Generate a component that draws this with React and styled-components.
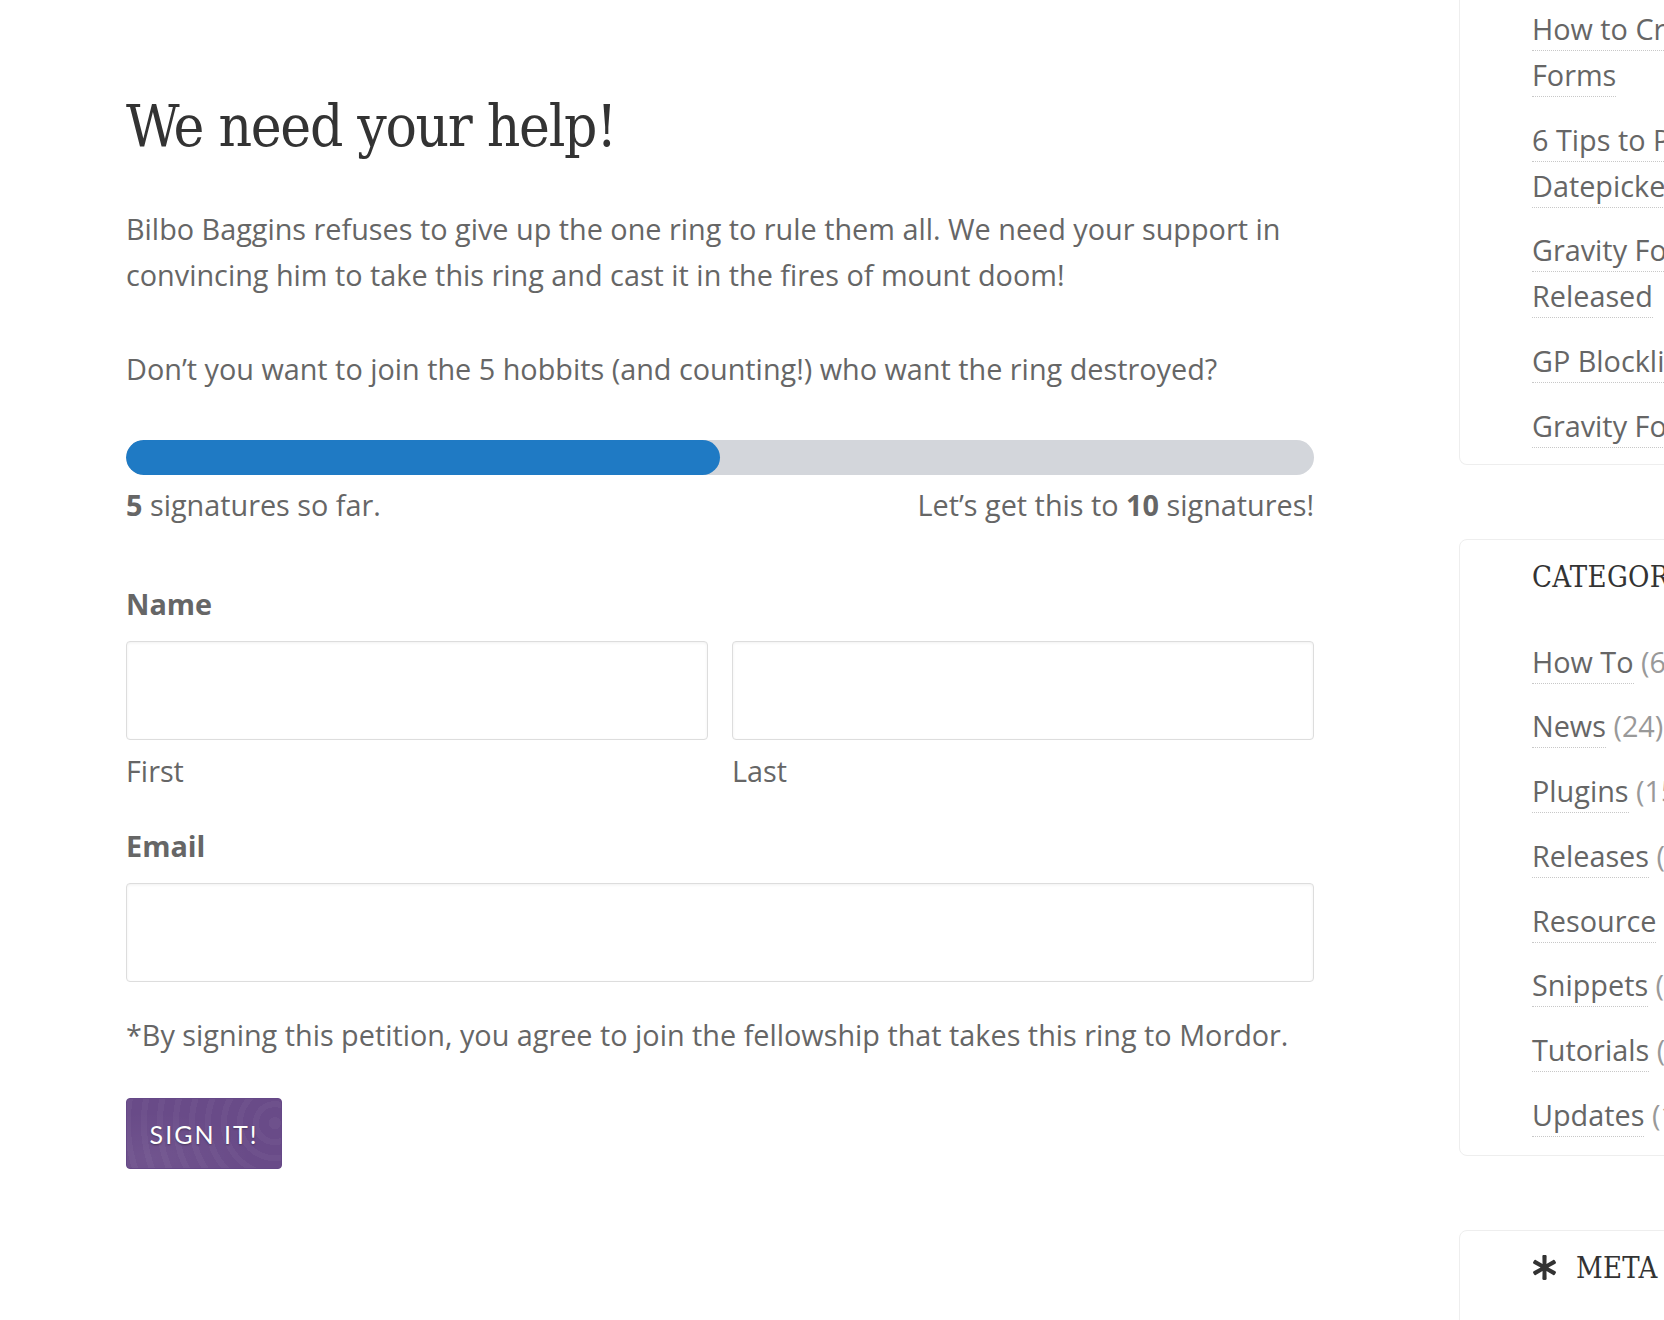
import React from "react";
import styled, { createGlobalStyle } from "styled-components";
import { FaAsterisk } from "react-icons/fa";

const GlobalStyle = createGlobalStyle`
  html, body {
    margin: 0;
    padding: 0;
    background: #fff;
    overflow: hidden;
  }
  body {
    font-family: "Open Sans", "Liberation Sans", sans-serif;
    color: #666;
  }
`;

const recentPosts = [
  "How to Create Beautiful Forms",
  "6 Tips to Perfect Your Datepicker",
  "Gravity Forms 2.5 Is Released",
  "GP Blocklist 1.0",
  "Gravity Forms 2.4.20",
];

const categories = [
  ["How To", 6],
  ["News", 24],
  ["Plugins", 15],
  ["Releases", 12],
  ["Resource", 9],
  ["Snippets", 31],
  ["Tutorials", 18],
  ["Updates", 14],
];

const metaLinks = ["Log in", "Entries feed", "Comments feed", "WordPress.org"];

export default function App() {
  const signatures = 5;
  const goal = 10;

  return (
    <>
      <GlobalStyle />
      <Page>
        <Main>
          <Title>We need your help!</Title>
          <Para>
            Bilbo Baggins refuses to give up the one ring to rule them all. We
            need your support in convincing him to take this ring and cast it in
            the fires of mount doom!
          </Para>
          <Para>
            Don’t you want to join the 5 hobbits (and counting!) who want the
            ring destroyed?
          </Para>

          <Progress>
            <Track>
              <Fill style={{ width: `${(signatures / goal) * 100}%` }} />
            </Track>
            <ProgressMeta>
              <span>
                <b>{signatures}</b> signatures so far.
              </span>
              <span>
                Let’s get this to <b>{goal}</b> signatures!
              </span>
            </ProgressMeta>
          </Progress>

          <Field $gap="53px">
            <Label>Name</Label>
            <NameRow>
              <SubField>
                <Input type="text" />
                <SubLabel>First</SubLabel>
              </SubField>
              <SubField>
                <Input type="text" />
                <SubLabel>Last</SubLabel>
              </SubField>
            </NameRow>
          </Field>

          <Field $gap="29px">
            <Label>Email</Label>
            <Input type="email" />
          </Field>

          <Disclaimer>
            *By signing this petition, you agree to join the fellowship that
            takes this ring to Mordor.
          </Disclaimer>

          <SignButton type="button">Sign it!</SignButton>
        </Main>

        <Sidebar>
          <Widget $first>
            <LinkList>
              {recentPosts.map((p) => (
                <LinkItem key={p}>
                  <SideLink>{p}</SideLink>
                </LinkItem>
              ))}
            </LinkList>
          </Widget>

          <Widget>
            <WidgetTitle>Categories</WidgetTitle>
            <LinkList>
              {categories.map(([name, count]) => (
                <LinkItem key={name}>
                  <SideLink>{name}</SideLink> <Count>({count})</Count>
                </LinkItem>
              ))}
            </LinkList>
          </Widget>

          <Widget>
            <WidgetTitle>
              <FaAsterisk size={25} />
              Meta
            </WidgetTitle>
            <LinkList>
              {metaLinks.map((m) => (
                <LinkItem key={m}>
                  <SideLink>{m}</SideLink>
                </LinkItem>
              ))}
            </LinkList>
          </Widget>
        </Sidebar>
      </Page>
    </>
  );
}

const Page = styled.div`
  display: flex;
  align-items: flex-start;
  padding-left: 126px;
  width: 2000px;
`;

const Main = styled.main`
  width: 1188px;
  flex-shrink: 0;
  padding-top: 91px;
`;

const Title = styled.h1`
  margin: 0 0 45px;
  font-family: "DejaVu Serif", "Liberation Serif", serif;
  font-stretch: condensed;
  font-weight: 400;
  font-size: 58px;
  line-height: 70px;
  color: #333;
  letter-spacing: -1.3px;
`;

const Para = styled.p`
  margin: 0 0 48px;
  font-size: 28.8px;
  line-height: 46px;
  color: #666;
`;

const Progress = styled.div`
  margin-top: 0;
`;

const Track = styled.div`
  height: 35px;
  background: #d3d6db;
  border-radius: 18px;
  overflow: hidden;
`;

const Fill = styled.div`
  height: 100%;
  background: #1f7ac4;
  border-radius: 18px;
`;

const ProgressMeta = styled.div`
  display: flex;
  justify-content: space-between;
  font-size: 28.8px;
  line-height: 46px;
  margin-top: 7px;

  b {
    font-weight: 700;
  }
`;

const Field = styled.div`
  margin-top: ${(p) => p.$gap};
`;

const Label = styled.div`
  font-weight: 700;
  font-size: 28.8px;
  line-height: 46px;
  color: #666;
  margin-bottom: 14px;
`;

const NameRow = styled.div`
  display: grid;
  grid-template-columns: 1fr 1fr;
  column-gap: 24px;
`;

const SubField = styled.div`
  display: flex;
  flex-direction: column;
`;

const Input = styled.input`
  display: block;
  box-sizing: border-box;
  width: 100%;
  height: 99px;
  border: 1px solid #ddd;
  border-radius: 4px;
  background: #fff;
  box-shadow: inset 0 1px 3px rgba(0, 0, 0, 0.06);
  font: inherit;
  outline: none;
`;

const SubLabel = styled.span`
  font-size: 28.8px;
  line-height: 46px;
  margin-top: 8px;
`;

const Disclaimer = styled.p`
  margin: 30px 0 0;
  font-size: 28.8px;
  line-height: 46px;
`;

const SignButton = styled.button`
  display: block;
  margin-top: 40px;
  width: 156px;
  height: 71px;
  border: 1px solid #654887;
  border-radius: 4px;
  background-color: #694b88;
  background-image:
    repeating-radial-gradient(
      circle at 96% 35%,
      rgba(255, 255, 255, 0.035) 0 6px,
      rgba(255, 255, 255, 0) 6px 16px
    ),
    radial-gradient(ellipse at 15% 85%, rgba(255, 255, 255, 0.05), transparent 55%);
  color: #fff;
  font-family: Lato, "Open Sans", sans-serif;
  font-size: 25px;
  letter-spacing: 2px;
  text-transform: uppercase;
  text-shadow: 0 1px 2px rgba(0, 0, 0, 0.35);
  cursor: pointer;
`;

const Sidebar = styled.aside`
  margin-left: 145px;
  width: 460px;
  flex-shrink: 0;
  display: flex;
  flex-direction: column;
  gap: 74px;
`;

const Widget = styled.section`
  border: 1px solid #eee;
  border-radius: ${(p) => (p.$first ? "0 0 0 8px" : "8px")};
  border-top-width: ${(p) => (p.$first ? "0" : "1px")};
  padding: ${(p) => (p.$first ? "6px 0 15px 72px" : "15px 0 17px 72px")};
`;

const WidgetTitle = styled.h3`
  display: flex;
  align-items: center;
  gap: 19px;
  margin: 0 0 40px;
  font-family: "DejaVu Serif", "Liberation Serif", serif;
  font-stretch: condensed;
  font-weight: 400;
  font-size: 29px;
  line-height: 44px;
  color: #333;
  text-transform: uppercase;
  letter-spacing: 0.3px;

  svg {
    color: #333;
  }
`;

const LinkList = styled.ul`
  list-style: none;
  margin: 0;
  padding: 0;
  width: 355px;
`;

const LinkItem = styled.li`
  font-size: 28.8px;
  line-height: 46px;
  margin-bottom: 18.7px;

  &:last-child {
    margin-bottom: 0;
  }
`;

const SideLink = styled.a`
  color: #666;
  text-decoration: none;
  border-bottom: 1px dotted #c8c8c8;
  padding-bottom: 2px;
`;

const Count = styled.span`
  color: #999;
`;
